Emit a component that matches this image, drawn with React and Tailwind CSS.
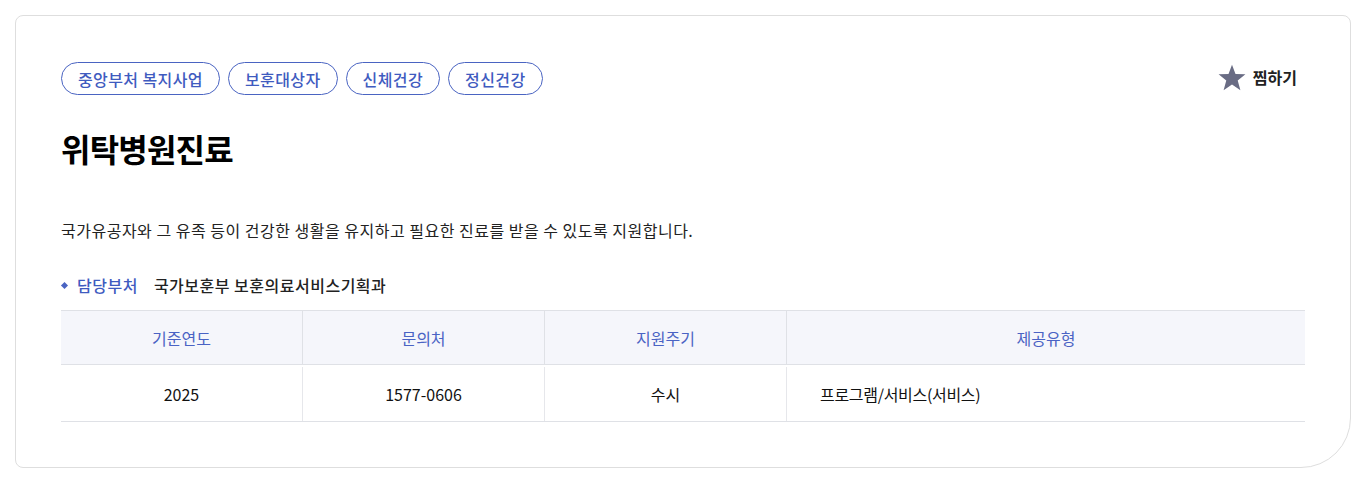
const tags = ["중앙부처 복지사업", "보훈대상자", "신체건강", "정신건강"];

function StarIcon() {
  return (
    <svg width="28" height="27" viewBox="0 0 24 23" fill="#696c84">
      <polygon points="12,0.5 15,8.4 23.5,8.8 16.9,14.1 19.2,22.4 12,17.6 4.8,22.4 7.1,14.1 0.5,8.8 9,8.4" />
    </svg>
  );
}

function App() {
  return (
    <div
      className="min-h-screen bg-white px-[15px] pt-[15px] pb-[14px] pr-[14px]"
      style={{ fontFamily: '"Noto Sans CJK KR", "Noto Sans", sans-serif' }}
    >
      <div className="border border-[#dedede] rounded-tl-[8px] rounded-tr-[8px] rounded-bl-[8px] rounded-br-[50px] px-[45px] pt-[46px] pb-[45px]">
        <div className="flex items-center justify-between h-[33px]">
          <div className="flex gap-[8px]">
            {tags.map((t) => (
              <span
                key={t}
                className="h-[33px] px-[16px] flex items-center rounded-full border border-[#4a64c2] text-[#3f5bbf] text-[16px] font-medium tracking-[0.4px]"
              >
                {t}
              </span>
            ))}
          </div>
          <button className="flex items-center gap-[7px] mr-[8px] -mt-[3px]">
            <StarIcon />
            <span className="text-[16px] font-bold text-[#222] tracking-[0px]">찜하기</span>
          </button>
        </div>

        <h1 className="mt-[33px] text-[32px] leading-[40px] font-bold text-black tracking-[-0.8px]">
          위탁병원진료
        </h1>

        <p className="mt-[50px] text-[16px] leading-[24px] text-[#222] tracking-[0.5px]">
          국가유공자와 그 유족 등이 건강한 생활을 유지하고 필요한 진료를 받을 수 있도록 지원합니다.
        </p>

        <div className="mt-[32px] flex items-center h-[22px] text-[16px] font-medium tracking-[0.5px]">
          <span className="w-[5px] h-[5px] bg-[#4a64c2] rotate-45 ml-[1px] mr-[10px]"></span>
          <span className="text-[#3f5bbf]">담당부처</span>
          <span className="ml-[16px] text-[#222]">국가보훈부 보훈의료서비스기획과</span>
        </div>

        <div className="mt-[14px] border-t border-[#dfe1e6]">
          <div className="grid grid-cols-[241px_242px_242px_1fr] h-[54px] bg-[#f5f6fb] border-b border-[#dfe1e6] text-[16px] text-[#4a63c4]">
            <div className="flex items-center justify-center">기준연도</div>
            <div className="flex items-center justify-center border-l border-[#dfe1e6]">문의처</div>
            <div className="flex items-center justify-center border-l border-[#dfe1e6]">지원주기</div>
            <div className="flex items-center justify-center border-l border-[#dfe1e6]">제공유형</div>
          </div>
          <div className="grid grid-cols-[241px_242px_242px_1fr] h-[57px] pt-[2px] border-b border-[#dfe1e6] text-[16px] text-[#111]">
            <div className="flex items-center justify-center">2025</div>
            <div className="flex items-center justify-center border-l border-[#e6e7eb]">1577-0606</div>
            <div className="flex items-center justify-center border-l border-[#e6e7eb]">수시</div>
            <div className="flex items-center pl-[33px] border-l border-[#e6e7eb] tracking-[-0.3px]">프로그램/서비스(서비스)</div>
          </div>
        </div>
      </div>
    </div>
  );
}

export default App;
